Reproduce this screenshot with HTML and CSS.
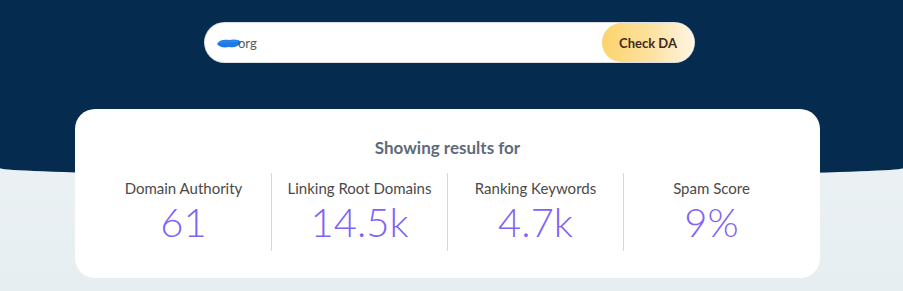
FILE: index.html
```html
<!DOCTYPE html>
<html lang="en">
<head>
    <meta charset="UTF-8">
    <meta name="viewport" content="width=device-width, initial-scale=1.0">
    <title>Check DA</title>
    <link rel="stylesheet" href="styles.css">
</head>
<body>
    <div class="hero">
        <form class="search" onsubmit="return false">
            <div class="search-field">
                <svg class="scribble" width="26" height="12" viewBox="0 0 26 12">
                    <path d="M1 7 C3 3, 8 2, 13 3 C17 2, 23 2, 25 5 C24 9, 18 11, 13 10 C8 11, 3 10, 1 7 Z" fill="#1f7ae6"/>
                    <path d="M4 5 L22 4" stroke="#2b86f0" stroke-width="2" stroke-linecap="round"/>
                </svg>
                <span class="search-text">org</span>
            </div>
            <button class="check-btn">Check DA</button>
        </form>
    </div>

    <div class="results">
        <h2 class="results-title">Showing results for</h2>
        <div class="stats">
            <div class="stat">
                <div class="stat-label">Domain Authority</div>
                <div class="stat-value">61</div>
            </div>
            <div class="stat">
                <div class="stat-label">Linking Root Domains</div>
                <div class="stat-value">14.5k</div>
            </div>
            <div class="stat">
                <div class="stat-label">Ranking Keywords</div>
                <div class="stat-value">4.7k</div>
            </div>
            <div class="stat">
                <div class="stat-label">Spam Score</div>
                <div class="stat-value">9%</div>
            </div>
        </div>
    </div>
</body>
</html>
```

FILE: styles.css
```css
body {
    margin: 0;
    font-family: Lato, "Liberation Sans", sans-serif;
    background: linear-gradient(#eff4f6, #e7eef1);
    min-height: 291px;
    overflow: hidden;
}

.hero {
    background-color: #052b4e;
    height: 153px;
    padding-top: 23px;
    border-radius: 0 0 50% 50% / 0 0 8px 8px;
}

.search {
    width: 489px;
    height: 39px;
    margin-left: 205px;
    display: flex;
    background: #fff;
    border-radius: 20px;
    box-shadow: 0 0 0 1px #d9dfe4;
}

.search-field {
    flex: 1;
    display: flex;
    align-items: center;
    padding-left: 11px;
}

.scribble {
    margin-top: 1px;
}

.search-text {
    font-size: 13px;
    color: #555b63;
    margin-left: -4px;
}

.check-btn {
    width: 92px;
    border: none;
    border-radius: 20px;
    background: linear-gradient(90deg, #fcd36c 0%, #fde2a3 55%, #fef4e2 100%);
    color: #3e2a1e;
    font-family: Lato, "Liberation Sans", sans-serif;
    font-weight: 700;
    font-size: 13px;
    cursor: pointer;
}

.results {
    width: 745px;
    height: 169px;
    box-sizing: border-box;
    margin: -67px 0 0 75px;
    background: #fff;
    border-radius: 20px;
    padding: 29px 21px 0;
}

.results-title {
    margin: 0;
    text-align: center;
    font-size: 17px;
    font-weight: 700;
    color: #5f6a78;
    line-height: 20px;
}

.stats {
    display: flex;
    margin-top: 15px;
}

.stat {
    width: 176px;
    height: 78px;
    text-align: center;
    border-left: 1px solid #d6d9dc;
}

.stat:first-child {
    border-left: none;
}

.stat-label {
    font-size: 15px;
    color: #4a4a4a;
    line-height: 18px;
    margin-top: 6px;
}

.stat-value {
    font-size: 40px;
    font-weight: 300;
    color: #7f62f6;
    line-height: 44px;
    margin-top: 3px;
}
```
